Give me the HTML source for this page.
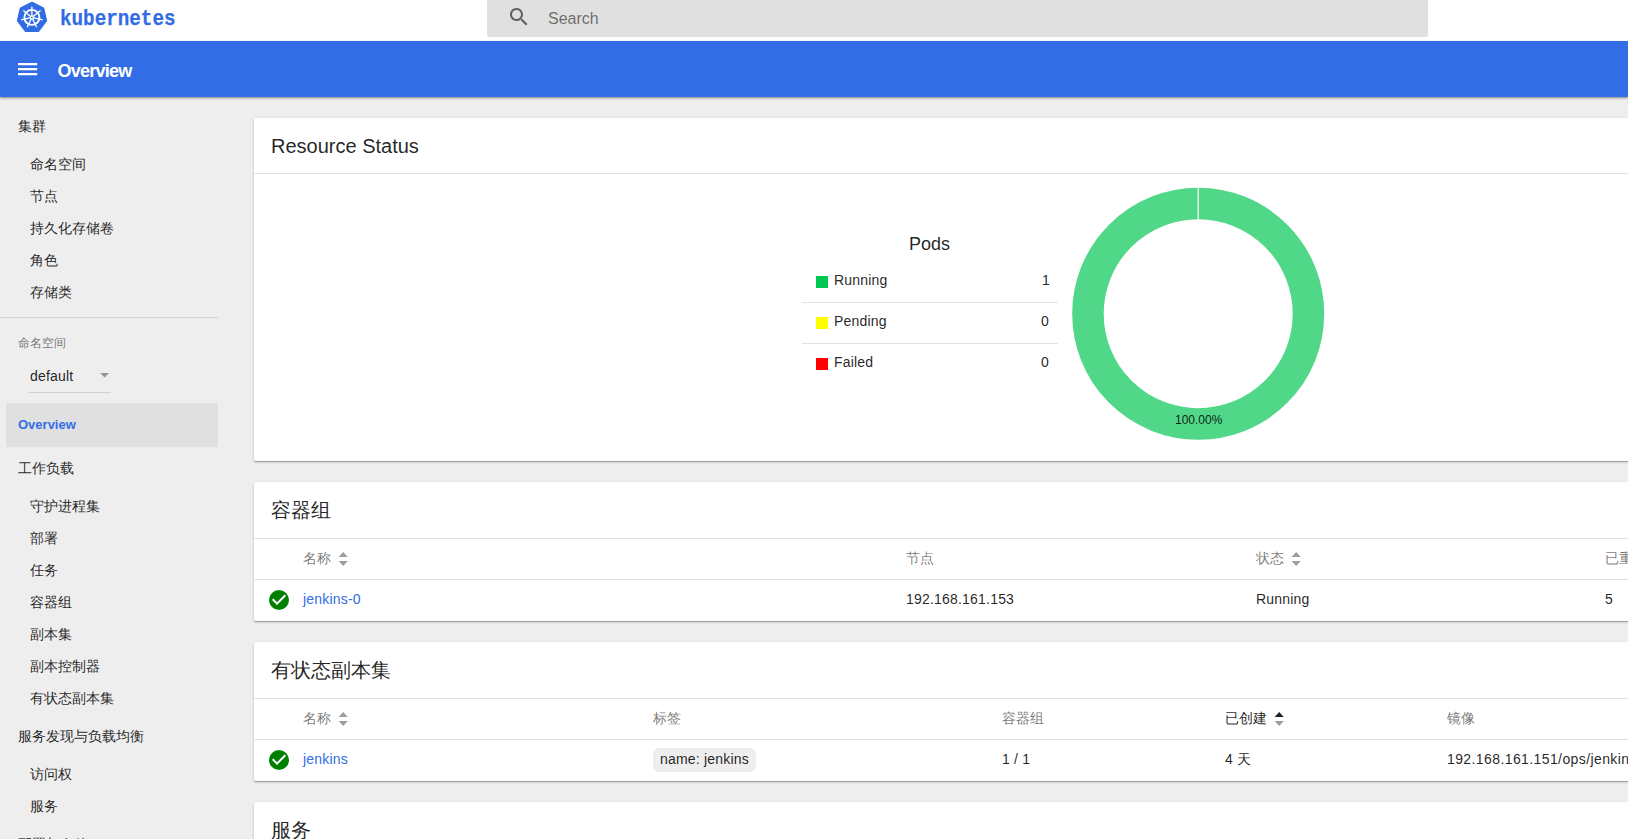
<!DOCTYPE html>
<html><head><meta charset="utf-8">
<style>
html,body{margin:0;padding:0;}
body{width:1628px;height:839px;overflow:hidden;position:relative;background:#eeeeee;font-family:"Liberation Sans",sans-serif;color:rgba(0,0,0,.87);}
.abs{position:absolute;white-space:nowrap;}
#hdr{position:absolute;left:0;top:0;width:1628px;height:41px;background:#fff;}
#search{position:absolute;left:487px;top:0;width:941px;height:37px;background:#e0e0e0;border-radius:0 0 2px 2px;}
#tb{position:absolute;left:0;top:41px;width:1628px;height:56px;background:#326de6;box-shadow:0 1px 2px rgba(0,0,0,.38),0 2px 3px rgba(0,0,0,.06);z-index:2;}
.nav{position:absolute;font-size:14px;line-height:16px;white-space:nowrap;color:rgba(0,0,0,.87);}
.card{position:absolute;left:254px;width:1420px;background:#fff;border-radius:2px;box-shadow:0 1px 3px 0 rgba(0,0,0,.2),0 1px 1px 0 rgba(0,0,0,.14),0 2px 1px -1px rgba(0,0,0,.12);}
.ctitle{position:absolute;left:17px;font-size:20px;line-height:24px;white-space:nowrap;color:rgba(0,0,0,.87);}
.hr{position:absolute;left:0;width:100%;height:1px;background:rgba(0,0,0,.12);}
.th{position:absolute;font-size:14px;line-height:16px;color:rgba(0,0,0,.54);white-space:nowrap;}
.td{position:absolute;font-size:14px;line-height:16px;color:rgba(0,0,0,.87);white-space:nowrap;letter-spacing:0.2px;}
.lnk{color:#326de6;}
</style></head>
<body>
<div id="hdr">
  <svg class="abs" style="left:14px;top:0px" width="36" height="36" viewBox="0 0 36 36">
    <polygon points="18,2.6 29.4,8.2 32.2,20.8 24.5,31 11.5,31 3.8,20.8 6.6,8.2" fill="#326ce5" stroke="#326ce5" stroke-width="1.8" stroke-linejoin="round"/>
    <circle cx="17.9" cy="17.4" r="7.5" fill="none" stroke="#fff" stroke-width="1.9"/>
    <path d="M17.90 17.40L17.90 6.40M17.90 17.40L26.50 10.54M17.90 17.40L28.62 19.85M17.90 17.40L22.67 27.31M17.90 17.40L13.13 27.31M17.90 17.40L7.18 19.85M17.90 17.40L9.30 10.54" stroke="#fff" stroke-width="1.3" stroke-linecap="butt"/>
    <circle cx="17.9" cy="17.4" r="2.2" fill="#fff"/>
    <circle cx="17.9" cy="17.4" r="0.9" fill="#326ce5"/>
  </svg>
  <div class="abs" style="left:59.5px;top:7px;font-family:'Liberation Mono',monospace;font-weight:bold;font-size:22px;line-height:26px;color:#326ce5;-webkit-text-stroke:0.25px #326ce5;transform:scaleX(0.875);transform-origin:0 0">kubernetes</div>
  <div id="search">
    <svg class="abs" style="left:20px;top:5px" width="24" height="24" viewBox="0 0 24 24"><path fill="#5f5f5f" d="M15.5 14h-.79l-.28-.27C15.41 12.59 16 11.11 16 9.5 16 5.91 13.090 3 9.5 3S3 5.91 3 9.5 5.91 16 9.5 16c1.61 0 3.090-.59 4.23-1.57l.27.28v.79l5 4.99L20.49 19l-4.99-5zm-6 0C7.010 14 5 11.99 5 9.5S7.010 5 9.5 5 14 7.010 14 9.5 11.99 14 9.5 14z"/></svg>
    <div class="abs" style="left:61px;top:10px;font-size:16px;line-height:18px;color:rgba(0,0,0,.54)">Search</div>
  </div>
</div>
<div id="tb">
  <svg class="abs" style="left:15px;top:16px" width="25" height="24" viewBox="0 0 25 24"><path fill="#fff" d="M3 18.2h19.2v-2.2H3zm0-5h19.2v-2.2H3zm0-7.2v2.2h19.2V6H3z"/></svg>
  <div class="abs" style="left:57.5px;top:20px;font-size:18px;line-height:20px;font-weight:bold;color:#fff;letter-spacing:-0.75px">Overview</div>
</div>

<!-- sidebar -->
<div class="nav" style="left:18px;top:118px">集群</div>
<div class="nav" style="left:30px;top:156px">命名空间</div>
<div class="nav" style="left:30px;top:188px">节点</div>
<div class="nav" style="left:30px;top:220px">持久化存储卷</div>
<div class="nav" style="left:30px;top:252px">角色</div>
<div class="nav" style="left:30px;top:284px">存储类</div>
<div class="abs" style="left:0;top:317px;width:218px;height:1px;background:rgba(0,0,0,.12)"></div>
<div class="nav" style="left:18px;top:335px;font-size:12px;color:rgba(0,0,0,.54)">命名空间</div>
<div class="nav" style="left:30px;top:368px;letter-spacing:0.2px">default</div>
<svg class="abs" style="left:100px;top:373px" width="10" height="5" viewBox="0 0 10 5"><path d="M0.2 0L9 0L4.6 4.6Z" fill="rgba(0,0,0,.38)"/></svg>
<div class="abs" style="left:28px;top:392px;width:83px;height:1px;background:rgba(0,0,0,.12)"></div>
<div class="abs" style="left:6px;top:403px;width:212px;height:44px;background:#e0e0e0;"></div>
<div class="nav" style="left:18px;top:417px;color:#326de6;font-size:13px;font-weight:bold">Overview</div>
<div class="nav" style="left:18px;top:460px">工作负载</div>
<div class="nav" style="left:30px;top:498px">守护进程集</div>
<div class="nav" style="left:30px;top:530px">部署</div>
<div class="nav" style="left:30px;top:562px">任务</div>
<div class="nav" style="left:30px;top:594px">容器组</div>
<div class="nav" style="left:30px;top:626px">副本集</div>
<div class="nav" style="left:30px;top:658px">副本控制器</div>
<div class="nav" style="left:30px;top:690px">有状态副本集</div>
<div class="nav" style="left:18px;top:728px">服务发现与负载均衡</div>
<div class="nav" style="left:30px;top:766px">访问权</div>
<div class="nav" style="left:30px;top:798px">服务</div>
<div class="nav" style="left:18px;top:836px">配置与存储</div>

<!-- card 1 -->
<div class="card" style="top:118px;height:343px">
  <div class="ctitle" style="top:16px">Resource Status</div>
  <div class="hr" style="top:55px"></div>
  <div class="abs" style="left:655px;top:115px;font-size:18px;line-height:22px;color:rgba(0,0,0,.87)">Pods</div>
  <div class="abs" style="left:562px;top:158px;width:12px;height:12px;background:#00c752"></div>
  <div class="td" style="left:580px;top:153.5px">Running</div>
  <div class="td" style="left:788px;top:153.5px">1</div>
  <div class="abs" style="left:548px;top:184px;width:256px;height:1px;background:rgba(0,0,0,.12)"></div>
  <div class="abs" style="left:562px;top:199px;width:12px;height:12px;background:#ffff00"></div>
  <div class="td" style="left:580px;top:194.5px">Pending</div>
  <div class="td" style="left:787px;top:194.5px">0</div>
  <div class="abs" style="left:548px;top:225px;width:256px;height:1px;background:rgba(0,0,0,.12)"></div>
  <div class="abs" style="left:562px;top:240px;width:12px;height:12px;background:#ff0000"></div>
  <div class="td" style="left:580px;top:235.5px">Failed</div>
  <div class="td" style="left:787px;top:235.5px">0</div>
  <svg class="abs" style="left:812px;top:64px" width="264" height="264" viewBox="0 0 264 264">
    <circle cx="132.2" cy="131.75" r="110.25" fill="none" stroke="#50d787" stroke-width="31.5"/>
    <line x1="132.2" y1="5" x2="132.2" y2="38" stroke="#fff" stroke-width="1.2"/>
  </svg>
  <div class="abs" style="left:921px;top:295px;font-size:12px;line-height:14px;color:rgba(0,0,0,.87)">100.00%</div>
</div>

<!-- card 2 -->
<div class="card" style="top:482px;height:139px">
  <div class="ctitle" style="top:16px">容器组</div>
  <div class="hr" style="top:56px"></div>
  <div class="th" style="left:49px;top:68px">名称</div>
  <svg class="abs" style="left:84px;top:70px" width="10" height="14" viewBox="0 0 10 14"><path d="M0.6 5L5.2 0L9.8 5Z" fill="#9e9e9e"/><path d="M0.6 9L5.2 14L9.8 9Z" fill="#9e9e9e"/></svg>
  <div class="th" style="left:652px;top:68px">节点</div>
  <div class="th" style="left:1002px;top:68px">状态</div>
  <svg class="abs" style="left:1037px;top:70px" width="10" height="14" viewBox="0 0 10 14"><path d="M0.6 5L5.2 0L9.8 5Z" fill="#9e9e9e"/><path d="M0.6 9L5.2 14L9.8 9Z" fill="#9e9e9e"/></svg>
  <div class="th" style="left:1351px;top:68px">已重启</div>
  <div class="hr" style="top:97px"></div>
  <svg class="abs" style="left:13px;top:106px" width="24" height="24" viewBox="0 0 24 24"><circle cx="12" cy="12" r="10" fill="#008000"/><path d="M10 17l-5-5 1.41-1.41L10 14.17l7.59-7.59L19 8l-9 9z" fill="#fff"/></svg>
  <div class="td lnk" style="left:49px;top:109px">jenkins-0</div>
  <div class="td" style="left:652px;top:109px">192.168.161.153</div>
  <div class="td" style="left:1002px;top:109px">Running</div>
  <div class="td" style="left:1351px;top:109px">5</div>
</div>

<!-- card 3 -->
<div class="card" style="top:642px;height:139px">
  <div class="ctitle" style="top:16px">有状态副本集</div>
  <div class="hr" style="top:56px"></div>
  <div class="th" style="left:49px;top:68px">名称</div>
  <svg class="abs" style="left:84px;top:70px" width="10" height="14" viewBox="0 0 10 14"><path d="M0.6 5L5.2 0L9.8 5Z" fill="#9e9e9e"/><path d="M0.6 9L5.2 14L9.8 9Z" fill="#9e9e9e"/></svg>
  <div class="th" style="left:399px;top:68px">标签</div>
  <div class="th" style="left:748px;top:68px">容器组</div>
  <div class="th" style="left:971px;top:68px;color:rgba(0,0,0,.87)">已创建</div>
  <svg class="abs" style="left:1020px;top:70px" width="10" height="14" viewBox="0 0 10 14"><path d="M0.6 5L5.2 0L9.8 5Z" fill="#222"/><path d="M0.6 9L5.2 14L9.8 9Z" fill="#9e9e9e"/></svg>
  <div class="th" style="left:1193px;top:68px">镜像</div>
  <div class="hr" style="top:97px"></div>
  <svg class="abs" style="left:13px;top:106px" width="24" height="24" viewBox="0 0 24 24"><circle cx="12" cy="12" r="10" fill="#008000"/><path d="M10 17l-5-5 1.41-1.41L10 14.17l7.59-7.59L19 8l-9 9z" fill="#fff"/></svg>
  <div class="td lnk" style="left:49px;top:109px">jenkins</div>
  <div class="abs" style="left:399px;top:106px;width:103px;height:24px;border-radius:6px;background:#eeeeee"></div>
  <div class="td" style="left:406px;top:109px">name: jenkins</div>
  <div class="td" style="left:748px;top:109px">1 / 1</div>
  <div class="td" style="left:971px;top:109px">4 天</div>
  <div class="td" style="left:1193px;top:109px;letter-spacing:0.4px">192.168.161.151/ops/jenkins:latest</div>
</div>

<!-- card 4 -->
<div class="card" style="top:802px;height:200px">
  <div class="ctitle" style="top:16px">服务</div>
</div>
</body></html>
